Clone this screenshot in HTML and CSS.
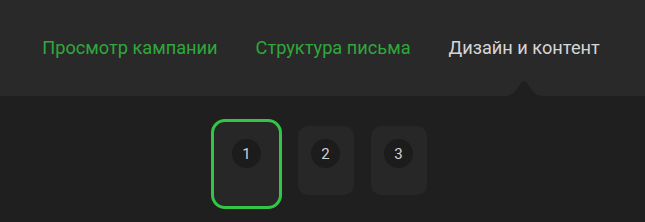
FILE: index.html
```html
<!DOCTYPE html>
<html lang="ru">
<head>
    <meta charset="UTF-8">
    <title>Редактор кампании</title>
    <link rel="stylesheet" href="styles.css">
</head>
<body>
    <header class="steps">
        <nav class="steps-nav">
            <a href="#" class="step-link">Просмотр кампании</a>
            <a href="#" class="step-link">Структура письма</a>
            <a href="#" class="step-link current">
                Дизайн и контент
                <svg class="notch" width="40" height="16" viewBox="0 0 40 16">
                    <path d="M0 16 C8 16 11 12 15 6 C17 3 18 1 20 1 C22 1 23 3 25 6 C29 12 32 16 40 16 Z" fill="#1f1f1f"/>
                </svg>
            </a>
        </nav>
    </header>
    <main class="layouts">
        <div class="layout-card selected"><span class="num">1</span></div>
        <div class="layout-card"><span class="num">2</span></div>
        <div class="layout-card"><span class="num">3</span></div>
    </main>
</body>
</html>
```

FILE: styles.css
```css
body {
    margin: 0;
    padding: 0;
    background-color: #1f1f1f;
    font-family: Roboto, 'Liberation Sans', sans-serif;
    height: 222px;
    overflow: hidden;
}
.steps {
    background-color: #292929;
    height: 96px;
    display: flex;
    justify-content: center;
    align-items: center;
    padding-right: 3px;
}
.steps-nav {
    display: flex;
    gap: 38px;
}
.step-link {
    display: block;
    line-height: 20px;
    color: #2fa83b;
    text-decoration: none;
    font-size: 18.2px;
    position: relative;
}
.step-link.current {
    color: #d6d6d6;
}
.notch {
    position: absolute;
    left: 50%;
    top: 42px;
    margin-left: -20px;
    display: block;
}
.layouts {
    display: flex;
    justify-content: center;
    align-items: flex-start;
    gap: 16px;
    padding-top: 23px;
    padding-right: 7px;
}
.layout-card {
    background-color: #272727;
    border-radius: 10px;
    padding: 13px 14px 27px 13px;
    margin-top: 7px;
}
.layout-card.selected {
    border: 3px solid #33c545;
    border-radius: 14px;
    padding: 17px 18px 38px 18px;
    margin-top: 0;
}
.layout-card:last-child {
    margin-left: 1px;
}
.num {
    display: flex;
    width: 29px;
    height: 29px;
    border-radius: 50%;
    background-color: #1c1c1c;
    color: #cfd2d6;
    font-size: 15px;
    justify-content: center;
    align-items: center;
}
```
